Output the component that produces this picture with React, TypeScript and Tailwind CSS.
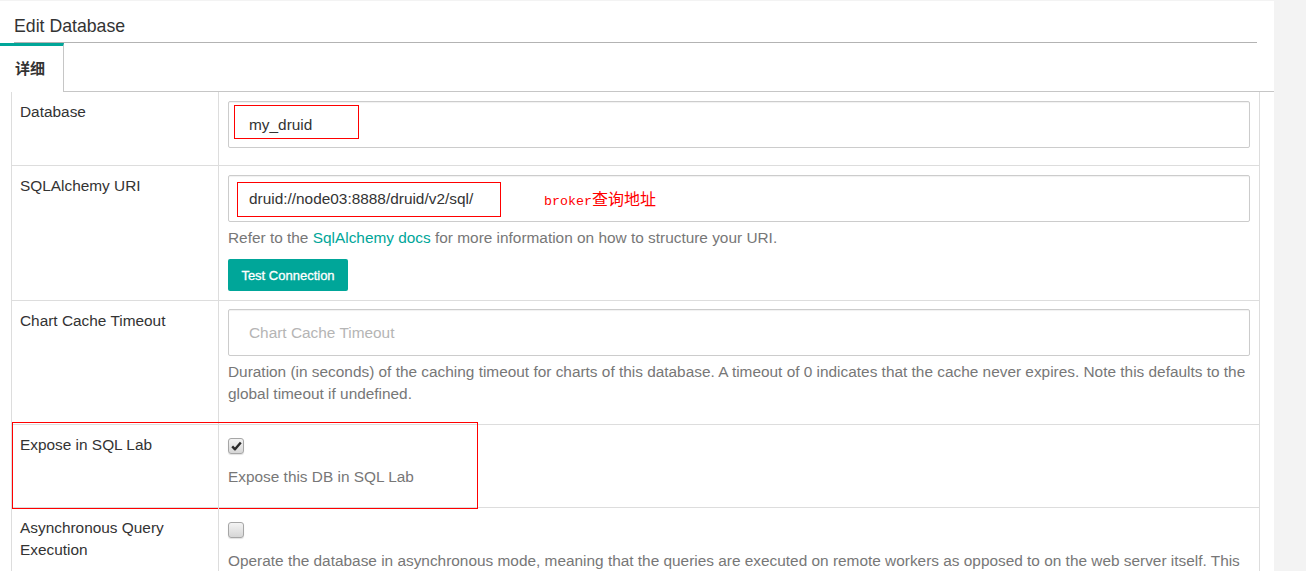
const font = { fontFamily: '"Liberation Sans", Arial, "Noto Sans CJK SC", sans-serif' };

const Checkbox = ({ checked }: { checked?: boolean }) => (
  <div className="flex h-[16px] w-[16px] items-center justify-center rounded-[3px] border border-[#a6a6a6] bg-gradient-to-b from-[#f4f4f4] to-[#d6d6d6] shadow-[0_1px_1px_rgba(0,0,0,0.12)]">
    {checked && (
      <svg width="11" height="10" viewBox="0 0 11 10">
        <path d="M1.2 5.4 L4 8.3 L9.8 1.4" fill="none" stroke="#2b2b2b" strokeWidth="2.4" strokeLinejoin="round" />
      </svg>
    )}
  </div>
);

const Input = ({ value, placeholder, children }: any) => (
  <div className="relative flex h-[47px] items-center rounded-[2px] border border-[#cccccc] pl-[20px] text-[15.4px] shadow-[inset_0_1px_1px_rgba(0,0,0,0.06)]">
    {value ? <span className="text-[#333]">{value}</span> : <span className="text-[#b5b5b5]">{placeholder}</span>}
    {children}
  </div>
);

const Row = ({ label, children, className = "", extra }: any) => (
  <div className={"relative flex border-b border-[#dddddd] " + className}>
    <div className="w-[207px] shrink-0 border-r border-[#dddddd] pl-2 pt-[9px] text-[15.4px] leading-[22px] text-[#333]">{label}</div>
    <div className="flex-1 px-[9px]">{children}</div>
    {extra}
  </div>
);

export default function App() {
  return (
    <div className="h-[571px] w-[1306px] overflow-hidden bg-[#f3f3f3] pt-px" style={font}>
      <div className="h-full w-[1274px] bg-white">
        <div className="pl-[14px] pr-[17px]">
          <h1 className="h-[42px] border-b border-[#b3b3b3] pt-[13px] text-[17.7px] leading-[24px] text-[#333]">Edit Database</h1>
        </div>

        <div className="flex">
          <div className="flex h-[49px] w-[64px] items-center border-t-[3px] border-r border-t-[#00a699] border-r-[#c6c6c6] pl-[15px] text-[15px] font-semibold text-[#333]">
            详细
          </div>
          <div className="h-[49px] flex-1 border-b border-[#c6c6c6]" />
        </div>

        <div className="ml-[11px] w-[1249px] border-x border-[#dddddd]">
          <Row label="Database" className="h-[74px]">
            <div className="pt-[9px]">
              <Input value="my_druid">
                <div className="absolute left-[5px] top-[3px] h-[34px] w-[125px] border border-[#ff0000]" />
              </Input>
            </div>
          </Row>

          <Row label="SQLAlchemy URI" className="h-[135px]">
            <div className="pt-[9px]">
              <Input value="druid://node03:8888/druid/v2/sql/">
                <div className="absolute left-[8px] top-[6px] h-[35px] w-[264px] border border-[#ff0000]" />
                <span className="absolute left-[315px] top-[10px] text-[#ff0000]">
                  <span className="text-[13.3px]" style={{ fontFamily: '"Liberation Mono", monospace' }}>broker</span>
                  <span className="text-[16px]" style={{ fontFamily: '"Noto Sans CJK SC", sans-serif' }}>查询地址</span>
                </span>
              </Input>
              <p className="mt-[5px] text-[15.4px] leading-[22px] text-[#777]">
                Refer to the <span className="text-[#00a699]">SqlAlchemy docs</span> for more information on how to structure your URI.
              </p>
              <button className="mt-[10px] h-[32px] w-[120px] rounded-[2px] bg-[#00a699] pt-[2px] text-[13px] text-white [-webkit-text-stroke:0.3px_white]">
                Test Connection
              </button>
            </div>
          </Row>

          <Row label="Chart Cache Timeout" className="h-[124px]">
            <div className="pt-2">
              <Input placeholder="Chart Cache Timeout" />
              <p className="mt-[5px] text-[15.4px] leading-[22px] text-[#777]">
                Duration (in seconds) of the caching timeout for charts of this database. A timeout of 0 indicates that the cache never expires. Note this defaults to the global timeout if undefined.
              </p>
            </div>
          </Row>

          <Row
            label="Expose in SQL Lab"
            className="h-[83px]"
            extra={<div className="absolute left-0 top-[-3px] h-[87px] w-[466px] border border-[#ff0000]" />}
          >
            <div className="pt-[13px]">
              <Checkbox checked />
              <p className="mt-[12px] text-[15.4px] leading-[22px] text-[#777]">Expose this DB in SQL Lab</p>
            </div>
          </Row>

          <Row label={<>Asynchronous Query<br />Execution</>} className="h-[120px]">
            <div className="pt-[14px]">
              <Checkbox />
              <p className="mt-[12px] text-[15.4px] leading-[22px] text-[#777]">
                Operate the database in asynchronous mode, meaning that the queries are executed on remote workers as opposed to on the web server itself. This assumes that you have a Celery worker setup as well as a results backend.
              </p>
            </div>
          </Row>
        </div>
      </div>
    </div>
  );
}
